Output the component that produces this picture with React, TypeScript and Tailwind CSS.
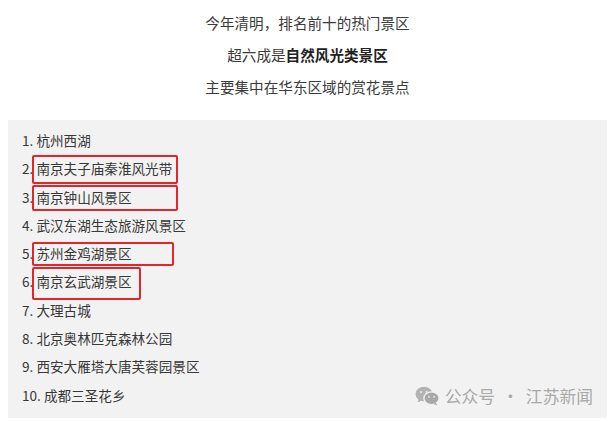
import React from "react";

interface Spot {
  name: string;
  // hand-drawn red box around the name, if any
  box?: { w: number; h: number; top: number };
}

const spots: Array<Spot> = [
  { name: "杭州西湖" },
  { name: "南京夫子庙秦淮风光带", box: { w: 146, h: 29, top: -3 } },
  { name: "南京钟山风景区", box: { w: 146, h: 26, top: -2 } },
  { name: "武汉东湖生态旅游风景区" },
  { name: "苏州金鸡湖景区", box: { w: 142, h: 24, top: -1 } },
  { name: "南京玄武湖景区", box: { w: 109, h: 33, top: -4 } },
  { name: "大理古城" },
  { name: "北京奥林匹克森林公园" },
  { name: "西安大雁塔大唐芙蓉园景区" },
  { name: "成都三圣花乡" },
];

const WeChatIcon: React.FC = () => (
  <svg width="25" height="20" viewBox="0 0 25 20" className="shrink-0">
    <ellipse cx="9" cy="8" rx="8.5" ry="7.3" fill="#b3b3b3" />
    <path d="M3.5 13 L2.6 16.4 L6.6 14.4 Z" fill="#b3b3b3" />
    <ellipse cx="16.5" cy="12.3" rx="7.6" ry="6.4" fill="#a8a8a8" stroke="#f2f2f2" strokeWidth="1.3" />
    <path d="M21 17 L22.3 19.6 L18.4 18.1 Z" fill="#a8a8a8" />
    <circle cx="6" cy="6" r="1" fill="#f2f2f2" />
    <circle cx="11.5" cy="6" r="1" fill="#f2f2f2" />
    <circle cx="14" cy="10.8" r="0.9" fill="#f2f2f2" />
    <circle cx="19" cy="10.8" r="0.9" fill="#f2f2f2" />
  </svg>
);

const App: React.FC = () => {
  return (
    <div
      className="w-[615px] h-[421px] bg-white overflow-hidden text-[#333]"
      style={{ fontFamily: '"Noto Sans CJK SC", "Noto Sans", sans-serif' }}
    >
      <div className="flex flex-col items-center pt-[7px] text-[14.6px] leading-[32px] text-[#3a3a3a]">
        <div>今年清明，排名前十的热门景区</div>
        <div>
          超六成是<span className="font-bold text-[#222]">自然风光类景区</span>
        </div>
        <div>主要集中在华东区域的赏花景点</div>
      </div>

      <div className="mt-[17px] ml-[8px] w-[599px] h-[298px] bg-[#f2f2f2] flex">
        <div className="flex flex-col pl-[14px] pt-[6px] text-[13.6px] leading-[28.3px] text-[#383838]">
          {spots.map((spot, index) => (
            <div key={spot.name} className="whitespace-nowrap">
              {index + 1}.{" "}
              <span className="relative">
                {spot.name}
                {spot.box && (
                  <span
                    className="absolute left-[-4px] border-2 border-[#e3262b] rounded-[2px]"
                    style={{ width: spot.box.w, height: spot.box.h, top: spot.box.top }}
                  />
                )}
              </span>
            </div>
          ))}
        </div>
        <div className="flex-1 flex items-end justify-end pr-[14px] pb-[11px]">
          <div className="flex items-center text-[16.8px] leading-[22px] text-[#a9a9a9]">
            <WeChatIcon />
            <span className="ml-[5px]">公众号</span>
            <span className="mx-[7px]">·</span>
            <span>江苏新闻</span>
          </div>
        </div>
      </div>
    </div>
  );
};

export default App;
